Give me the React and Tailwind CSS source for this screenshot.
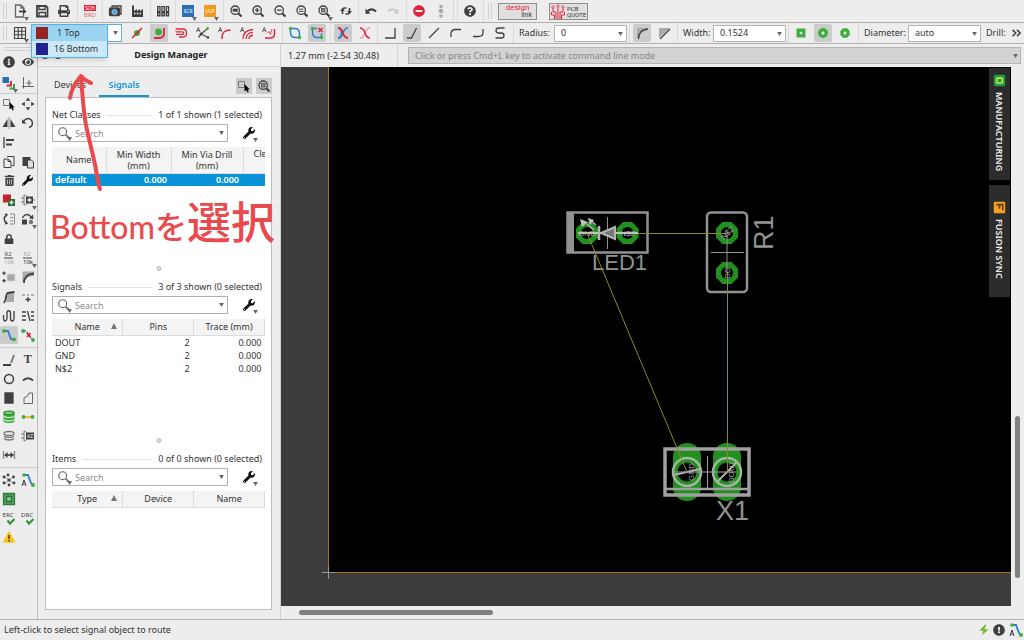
import {
  FaExclamationCircle,
  FaEye,
  FaInfoCircle,
  FaLock,
  FaMinusCircle,
  FaPrint,
  FaQuestionCircle,
  FaTrashAlt,
  FaWrench,
} from "react-icons/fa";

const DARK = "#404040";
const RED = "#e0243c";
const GREEN = "#3fae3a";
const BLUE = "#2b7fd0";

function Svg({ children, size = 16 }) {
  return (
    <svg
      width={size}
      height={size}
      viewBox="0 0 16 16"
      fill="none"
      stroke={DARK}
      strokeWidth="1.3"
      className="shrink-0"
    >
      {children}
    </svg>
  );
}

function Lens({ children }) {
  return (
    <Svg>
      <circle cx="7.200" cy="7.200" r="4.200" />
      <path d="m10.500 10.500 3 3" strokeWidth="2.200" />
      {children}
    </Svg>
  );
}

function Tag({ label, fill }) {
  return (
    <Svg>
      <rect x="2" y="2" width="12" height="12" fill={fill} stroke="none" />
      <text x="8" y="10" fontSize="5" textAnchor="middle" fill="#fff" stroke="none">
        {label}
      </text>
    </Svg>
  );
}

function Check({ label }) {
  return (
    <Svg>
      <text x="7" y="7" fontSize="6" textAnchor="middle" fill={DARK} stroke="none">
        {label}
      </text>
      <path d="m6.500 10.500 2.500 3 4.500-4.500" stroke="#2f9a35" strokeWidth="2.200" />
    </Svg>
  );
}

function RValue({ top, bottom }) {
  return (
    <Svg>
      <text x="7" y="6" fontSize="6" textAnchor="middle" fill={top} stroke="none">
        R2
      </text>
      <path d="M3 8h9" strokeWidth="1" />
      <text x="8" y="14" fontSize="6" textAnchor="middle" fill={bottom} stroke="none">
        10k
      </text>
    </Svg>
  );
}

const smallA = <path d="m1.500 7 1.800-4.500L5 7M2.200 5.500h2.200" strokeWidth=".8" />;

const ICONS = {
  open: (
    <Svg>
      <path d="M9 2H3.500v12h8v-3M9 2l3 3v1.500M9 2v3h3" stroke="#666" />
      <path d="M7 8.500h6" strokeWidth="1.800" />
      <path d="m11 5.500 3.500 3-3.500 3z" fill={DARK} stroke="none" />
    </Svg>
  ),
  save: (
    <Svg>
      <path d="M3 3h9l1.500 1.500V13.500H3z" strokeWidth="1.800" />
      <path d="M5 3v3.500h6V3M5 13V9.500h6.500V13" />
    </Svg>
  ),
  print: <FaPrint size={12} color={DARK} />,
  sch: (
    <Svg>
      <rect x="2" y="2" width="12" height="6" fill={RED} stroke="none" />
      <text x="8" y="7" fontSize="5" textAnchor="middle" fill="#fff" stroke="none">
        SCH
      </text>
      <text x="8" y="14" fontSize="6" textAnchor="middle" fill="#d06a70" stroke="none">
        BRD
      </text>
    </Svg>
  ),
  cam: (
    <Svg>
      <path d="M5 4V3h9v8h-1" />
      <rect x="2.500" y="5" width="10" height="7.500" rx="1" fill={DARK} />
      <circle cx="7.500" cy="9" r="2.600" fill="#4da3e8" stroke="#cde" strokeWidth=".6" />
    </Svg>
  ),
  factory: (
    <Svg>
      <path d="M3 14V2.500h2V8l3-2v2l3-2v2l3-2v8z" fill={DARK} stroke="none" />
      <path d="M5 10.500h7" stroke="#eee" strokeDasharray="1.500 1.200" />
    </Svg>
  ),
  books: (
    <Svg>
      <path d="M2 3h3.600v10.500H2zM6.300 3h3.600v10.500H6.300zM10.600 3h3.600v10.500h-3.600z" fill={DARK} stroke="none" />
      <path d="M3.800 4v4M8.100 4v4M12.400 4v4" stroke="#ddd" strokeWidth="1" />
      <path d="M3.800 10.500v1.500M8.100 10.500v1.500M12.400 10.500v1.500" stroke="#ddd" strokeWidth="1" />
    </Svg>
  ),
  scr: <Tag label="SCR" fill="#2a6fb5" />,
  ulp: <Tag label="ULP" fill="#f39a1d" />,
  zoomFit: (
    <Lens>
      <rect x="4.700" y="5.700" width="5" height="3" fill={DARK} stroke="none" />
    </Lens>
  ),
  zoomIn: (
    <Lens>
      <path d="M5 7.200h4.400M7.200 5v4.400" />
    </Lens>
  ),
  zoomOut: (
    <Lens>
      <path d="M5 7.200h4.400" />
    </Lens>
  ),
  zoomRedraw: (
    <Lens>
      <path d="M5 6.200h4.400M5 8.400h4.400" strokeWidth="1" />
    </Lens>
  ),
  zoomSelect: (
    <Lens>
      <rect x="5.500" y="5.500" width="3.500" height="3.500" fill="#888" stroke={DARK} strokeWidth=".7" />
    </Lens>
  ),
  swap: (
    <Svg>
      <path d="M4.500 11V7c0-1.500.5-2 2-2h2M11.500 5v4c0 1.500-.5 2-2 2h-2" strokeWidth="1.600" />
      <path d="m2 8 2.500-3L7 8zM9 8l2.500 3L14 8z" fill={DARK} stroke="none" />
    </Svg>
  ),
  undo: (
    <Svg>
      <path d="M4 9c2-3 6-4 9-.5" strokeWidth="2.200" />
      <path d="M2.500 5.500v5.500l5-.5z" fill={DARK} stroke="none" />
    </Svg>
  ),
  redo: (
    <Svg>
      <path d="M12 9c-2-3-6-4-9-.5" stroke="#ccc" strokeWidth="2.200" />
      <path d="M13.500 5.500v5.500l-5-.5z" fill="#ccc" stroke="none" />
    </Svg>
  ),
  stop: <FaMinusCircle size={12} color={RED} />,
  light: (
    <Svg>
      <g fill="#aaa" stroke="none">
        <circle cx="8" cy="3.500" r="1.800" />
        <circle cx="8" cy="8" r="2.300" />
        <circle cx="8" cy="13" r="1.800" />
      </g>
    </Svg>
  ),
  help: <FaQuestionCircle size={12} color={DARK} />,
  grid: (
    <Svg>
      <path d="M2.500 2.500h11v11h-11zM6.200 2.500v11M9.800 2.500v11M2.500 6.200h11M2.500 9.800h11" strokeWidth="1.100" />
    </Svg>
  ),
  ignore: (
    <Svg>
      <circle cx="8" cy="8" r="3" fill={GREEN} stroke="none" />
      <path d="M3 13 13 3" stroke={RED} strokeWidth="1.600" />
    </Svg>
  ),
  walk: (
    <Svg>
      <circle cx="7.500" cy="7" r="3.400" fill={GREEN} stroke="none" />
      <path d="M3 13h5c3 0 5-2 5-5V3" stroke={RED} strokeWidth="1.800" />
    </Svg>
  ),
  loop: (
    <Svg>
      <path d="M2.500 4H10c2 0 3.500 1.500 3.500 4S12 12 10 12H6M2.500 6.800H9.500c1.500 0 1.500 2.500 0 2.500H3" stroke={RED} />
    </Svg>
  ),
  fan: (
    <Svg>
      {smallA}
      <path d="m6 9 6-5M6 9l7 3.500M6 9l-2.500 3.500" stroke="#555" />
      <circle cx="12.500" cy="3.500" r="1.400" fill={GREEN} stroke="none" />
      <circle cx="6" cy="9" r="1.400" fill={DARK} stroke="none" />
      <circle cx="13" cy="12.500" r="1.200" fill={DARK} stroke="none" />
    </Svg>
  ),
  arc: (
    <Svg>
      {smallA}
      <path d="M5 14V12c0-4 3-7 8.500-7" stroke={RED} strokeWidth="1.500" />
    </Svg>
  ),
  arcs: (
    <Svg>
      {smallA}
      <path d="M4 14c0-6 4-9 10-9.500M7 14c0-4 3-6.500 7-6.500M10 14c0-2 1.500-3.500 4-3.500" stroke={RED} />
    </Svg>
  ),
  meander: (
    <Svg>
      {smallA}
      <path d="M4 13h5c3 0 4.500-1 4.500-4V4" stroke={RED} strokeWidth="1.500" />
      <path d="M6 8.500 8 6.500l1.500 3L11 4" strokeWidth=".8" stroke={RED} />
    </Svg>
  ),
  loopOn: (
    <Svg>
      <path d="M3.500 3.500v4c0 3 2 5 5 5h4v-4c0-3-2-5-5-5z" stroke={BLUE} strokeWidth="1.500" />
      <circle cx="3.500" cy="3.500" r="1.700" fill={GREEN} stroke="none" />
      <circle cx="12.500" cy="12.500" r="1.700" fill={GREEN} stroke="none" />
    </Svg>
  ),
  loopOff: (
    <Svg>
      <path d="M3.500 3.500v4c0 3 2 5 5 5h4v-4M3.500 3.500H8" stroke={BLUE} strokeWidth="1.500" />
      <path d="m9.500 3 4 4m0-4-4 4" stroke={RED} strokeWidth="1.500" />
      <circle cx="3.500" cy="3.500" r="1.700" fill={GREEN} stroke="none" />
      <circle cx="12.500" cy="12.500" r="1.700" fill={GREEN} stroke="none" />
    </Svg>
  ),
  cross1: (
    <Svg>
      <path d="M3 3c3 0 3.500 2.500 3.500 5S6 13 3 13" stroke={BLUE} strokeWidth="1.700" />
      <path d="M13 3c-3 0-4 2-5 5s-2 5-5 5" stroke={BLUE} strokeWidth="1.500" />
      <path d="M3 3c3 0 4 2 5 5s2 5 5 5" stroke={RED} strokeWidth="1.800" />
    </Svg>
  ),
  cross2: (
    <Svg>
      <path d="M13 3c-3 0-4 2-5 5s-2 5-5 5" stroke="#f0a0a8" strokeWidth="1.500" />
      <path d="M3 3c3 0 4 2 5 5s2 5 5 5" stroke={RED} strokeWidth="1.600" />
    </Svg>
  ),
  bend0: <Svg><path d="M3 13h10V3" /></Svg>,
  bend1: <Svg><path d="M3 13h4.500L12.500 3" /></Svg>,
  bend2: <Svg><path d="M3 13 13 3" /></Svg>,
  bend3: <Svg><path d="M3 12V9c0-3 1.500-4.500 4.500-4.500H13" /></Svg>,
  bend4: <Svg><path d="M3 11.500h5.500c3 0 4.500-1.500 4.500-4V4" /></Svg>,
  bend5: <Svg><path d="M12.500 3H7C3 3 3 8 7 8h2c4 0 4 5 0 5H3.500" /></Svg>,
  miterRound: (
    <Svg>
      <path d="M3 13V3h11l-2 3-5 1-2 6z" fill="#aaa" stroke="none" />
      <path d="M4.500 14C4.500 8 7 4.500 14 4" />
    </Svg>
  ),
  miterLine: (
    <Svg>
      <path d="M3 13V3h11z" fill="#aaa" stroke="none" />
      <path d="m4 14 10-10" />
    </Svg>
  ),
  viaSquare: (
    <Svg>
      <path d="M3.500 3.500h9v9h-9z" fill={GREEN} stroke="none" />
      <circle cx="8" cy="8" r="1.300" fill="#fff" stroke="none" />
    </Svg>
  ),
  viaRound: (
    <Svg>
      <circle cx="8" cy="8" r="5" fill={GREEN} stroke="none" />
      <circle cx="8" cy="8" r="1.500" fill="#fff" stroke="none" />
    </Svg>
  ),
  viaOct: (
    <Svg>
      <path d="M6 3.300h4L12.700 6v4L10 12.700H6L3.300 10V6z" fill={GREEN} stroke="none" />
      <circle cx="8" cy="8" r="1.500" fill="#fff" stroke="none" />
    </Svg>
  ),
  info: <FaInfoCircle size={12} color={DARK} />,
  eye: <FaEye size={12} color={DARK} />,
  layers: (
    <Svg>
      <path d="M1.500 2h6.500v6H1.500z" fill="#2a6fb5" stroke="none" />
      <path d="M10 6v4.500H5.500" stroke={RED} strokeWidth="2" />
      <path d="M13 9v4.500H8.500" stroke="#35a04a" strokeWidth="2" />
    </Svg>
  ),
  mark: <Svg><path d="M3.500 2v11.500M2 11.500h12M9 5v6M6.500 8h5" strokeWidth="1" stroke="#666" /></Svg>,
  group: (
    <Svg>
      <path d="M2.500 3.500h6v6h-6z" stroke="#777" strokeWidth="1" />
      <path d="M8.500 6v7.500l1.800-1.500 1.200 2.500 1.300-.6-1.200-2.400h2.200z" fill="#000" stroke="none" />
    </Svg>
  ),
  move: (
    <Svg>
      <path d="m8 1.500 2.300 3.300H5.700zM8 14.500l2.300-3.300H5.700zM1.500 8l3.300-2.300v4.600zM14.500 8l-3.300-2.300v4.600z" fill={DARK} stroke="none" />
    </Svg>
  ),
  mirror: (
    <Svg>
      <path d="M6.500 4v8H1.500zM9.500 4v8h5z" fill={DARK} stroke="none" />
      <path d="M8 2v12" strokeWidth=".8" stroke="#777" />
    </Svg>
  ),
  rotate: (
    <Svg>
      <path d="M4 6A4.500 4.500 0 1 1 9 12.500" strokeWidth="1.500" />
      <path d="M2 4v4.500h4.500z" fill={DARK} stroke="none" />
    </Svg>
  ),
  align: <Svg><path d="M3 3v11" /><path d="M5 6h8M5 10.500h6" strokeWidth="2.200" /></Svg>,
  copy: <Svg><path d="M6 2.500h7v9h-2M3 5h4l3 2.500V13.500H3zM7 5v2.500h3" strokeWidth="1" /></Svg>,
  paste: (
    <Svg>
      <path d="M2.500 3h8v9h-8z" fill={DARK} stroke="none" />
      <path d="M7.500 6h4l2 2v6h-6z" fill="#ddd" strokeWidth="1" />
    </Svg>
  ),
  trash: <FaTrashAlt size={11} color={DARK} />,
  wrench: <FaWrench size={11} color="#111" />,
  add: (
    <Svg>
      <path d="M2 2.500h8v8H2z" fill="#cf2027" stroke="none" />
      <path d="M7 7h7v7H7z" fill="#2b6b34" stroke="none" />
      <path d="M8.500 10.500h4M10.500 8.500v4" stroke="#fff" />
    </Svg>
  ),
  addGate: (
    <Svg>
      <path d="M1 6h3m-3 4h3M4 3c5 0 5 10 0 10zM12 8h3" strokeWidth="1" stroke="#777" />
      <path d="M6 4.500h7v7H6z" fill={DARK} stroke="none" />
      <path d="M7.500 8h4M9.500 6v4" stroke="#fff" />
    </Svg>
  ),
  pinswap: (
    <Svg>
      <path d="M5.500 4C2.500 6 2.500 10 5.500 12" strokeWidth="1.500" />
      <path d="M3.500 2.500 7 3 5.500 6zM3.500 13.500 7 13l-1.500-3z" fill={DARK} stroke="none" />
      <path d="M9 3h4.500v10H9M9 6.500h3M9 10h3" strokeWidth="1" stroke="#888" />
    </Svg>
  ),
  replace: (
    <Svg>
      <path d="M3 7V6c2-3.500 6-3.500 8 0" strokeWidth="1.500" />
      <path d="m9 7.500 4.500.5-.5-4.500z" fill={DARK} stroke="none" />
      <path d="M2 8.500h5v5H2z" fill={DARK} stroke="none" />
      <circle cx="11" cy="11" r="2.200" fill="#777" stroke="none" />
    </Svg>
  ),
  lock: <FaLock size={10} color={DARK} />,
  name: <RValue top="#555" bottom="#aaa" />,
  value: <RValue top="#aaa" bottom="#222" />,
  smash: (
    <Svg>
      <path d="M6.500 5.500h7v6h-7z" fill="#aaa" stroke="#aaa" strokeDasharray="1 1" />
      <path d="M3 2.500v3.500M1.300 4.200h3.400M3 10v3.500M1.300 11.700h3.400" />
    </Svg>
  ),
  split: (
    <Svg>
      <path d="M2.500 2.500v11L8 8l6-1V2.500z" fill="#aaa" stroke="none" />
      <path d="M4 14c0-5 2-9 10-9.500" strokeWidth="1.800" />
    </Svg>
  ),
  miter: (
    <Svg>
      <path d="M5 13 6.500 4H13v9z" fill="#aaa" stroke="none" />
      <path d="M2.500 13.500c3 0 2-9 4-9.500l7-1" strokeWidth="1.800" />
    </Svg>
  ),
  junction: <Svg><path d="M2 6h3m2 0h2m2 0h3" stroke="#999" /><path d="M8 8v5M5.500 10.500h5" /></Svg>,
  wave: <Svg><path d="M2.500 7v3c0 4 3.500 4 3.500 0V5c0-3 3.500-3 3.500 0v5c0 4 3.500 4 3.500 0V3" /></Svg>,
  diff: <Svg><path d="M2 4h4M2 8h4M2 12h4M11 4h3M11 8h3M11 12h3M7.500 3l2.500 10" /></Svg>,
  route: (
    <Svg>
      <path d="M3 4h4l3 8h3" stroke={BLUE} strokeWidth="1.800" />
      <circle cx="3" cy="4" r="2" fill={GREEN} stroke="none" />
      <circle cx="13" cy="12.500" r="2" fill={GREEN} stroke="none" />
    </Svg>
  ),
  ripup: (
    <Svg>
      <path d="M3 4h3l5 7 2 2" stroke={BLUE} strokeDasharray="3 1" />
      <path d="m7 6 3.500 4m0-4L7 10" stroke="#e11" strokeWidth="1.500" />
      <circle cx="3" cy="4" r="1.900" fill={GREEN} stroke="none" />
      <circle cx="13" cy="13" r="1.900" fill={GREEN} stroke="none" />
    </Svg>
  ),
  line: <Svg><path d="M2 13h8" strokeWidth="2" /><path d="m10 11 3-8" stroke="#777" strokeWidth="2" /></Svg>,
  text: (
    <span className="font-['Liberation_Serif',serif] text-[12px] font-bold leading-none text-[#404040]">
      T
    </span>
  ),
  circle: <Svg><circle cx="8" cy="8" r="4.500" strokeWidth="1.500" /></Svg>,
  arcDraw: <Svg><path d="M3 9.500c3-3 7-3 10 0" strokeWidth="1.900" /></Svg>,
  rect: <Svg><path d="M4 3h8v10H4z" fill={DARK} /></Svg>,
  polygon: <Svg><path d="M4 13.500V8l3.500-2L9 3h3.500v10.500z" stroke="#666" strokeWidth="1" /></Svg>,
  via: (
    <Svg>
      <path d="M2.500 3.500v9c2 2 9 2 11 0v-9z" fill={GREEN} stroke="none" />
      <ellipse cx="8" cy="4" rx="5" ry="1.800" fill="#7fd07a" stroke="#2b8a30" />
      <path d="M2.500 7c2 2 9 2 11 0M2.500 10.500c2 2 9 2 11 0" stroke="#fff" strokeWidth="1" />
    </Svg>
  ),
  signal: (
    <Svg>
      <path d="M3 8h10" stroke="#f0b020" strokeWidth="1.800" />
      <circle cx="3.500" cy="8" r="1.900" fill={GREEN} stroke="none" />
      <circle cx="12.500" cy="8" r="1.900" fill={GREEN} stroke="none" />
    </Svg>
  ),
  hole: (
    <Svg>
      <ellipse cx="8" cy="5.500" rx="5" ry="2" stroke="#777" />
      <path d="M3 8c2 2 8 2 10 0M3 10.500c2 2 8 2 10 0" stroke="#777" />
    </Svg>
  ),
  attribute: (
    <Svg>
      <path d="M1 6h3m-3 4h3M4 3c5 0 5 10 0 10z" strokeWidth="1" stroke="#777" />
      <path d="M6 4.500h8v7H6z" fill={DARK} stroke="none" />
      <text x="10" y="10" fontSize="5" textAnchor="middle" fill="#fff" stroke="none">
        AZ
      </text>
    </Svg>
  ),
  dimension: (
    <Svg>
      <path d="M2.500 4v8M13.500 4v8" stroke="#888" />
      <path d="M5 8h6" strokeWidth="1.600" />
      <path d="m3 8 3.500-3v6zM13 8 9.500 5v6z" fill={DARK} stroke="none" />
    </Svg>
  ),
  ratsnest: (
    <Svg>
      <path d="m3 4 5 4 5-4M3 12l5-4 5 4" strokeWidth=".6" />
      <g fill={DARK} stroke="none">
        <circle cx="8" cy="8" r="1.600" />
        <circle cx="3" cy="5" r="1.400" />
        <circle cx="7" cy="3" r="1.400" />
        <circle cx="12.500" cy="5" r="1.400" />
        <circle cx="3" cy="11" r="1.400" />
        <circle cx="8" cy="13" r="1.400" />
        <circle cx="13" cy="11" r="1.400" />
      </g>
    </Svg>
  ),
  autoroute: (
    <Svg>
      <path d="M4 3h4l3 8 2 2" stroke={BLUE} strokeWidth="1.800" />
      <path d="m2 14 2-6 2 6m-3.300-2h2.600" strokeWidth="1" />
      <circle cx="4" cy="3" r="1.800" fill={GREEN} stroke="none" />
      <circle cx="13" cy="13" r="2" fill={GREEN} stroke="none" />
    </Svg>
  ),
  board: (
    <Svg>
      <path d="M2.500 2.500h11v11h-11z" fill="#4fa35f" stroke="#2f7d40" />
      <path d="M5.500 5.500h5v5h-5z" fill="#8fca95" stroke="#2a6b38" />
    </Svg>
  ),
  erc: <Check label="ERC" />,
  drc: <Check label="DRC" />,
  warning: (
    <Svg>
      <path d="M8 3 13.500 13h-11z" fill="#fcc41c" stroke="#fcc41c" strokeLinejoin="round" />
      <path d="M8 6v4M8 11v1.600" strokeWidth="1.500" />
    </Svg>
  ),
};

function Triangle({ className = "" }) {
  return (
    <svg viewBox="0 0 6 5" className={`h-1 w-[5px] fill-[#666] ${className}`}>
      <path d="M0 0h6L3 5z" />
    </svg>
  );
}

function Tool({ name, active, drop }) {
  return (
    <button
      type="button"
      aria-label={name}
      className={`relative flex h-4 w-[22px] shrink-0 items-center justify-center ${
        active ? "before:absolute before:inset-x-[2px] before:-inset-y-px before:rounded-xs before:bg-[#cbcbcb]" : ""
      }`}
    >
      <span className="relative">{ICONS[name]}</span>
      {drop && <Triangle className="absolute -bottom-[2px] right-[2px]" />}
    </button>
  );
}

function Separator({ narrow }) {
  return (
    <div
      className={`flex shrink-0 justify-center self-stretch ${narrow ? "w-[3px]" : "w-1"}`}
    >
      <div className="w-px bg-[#dadada]" />
    </div>
  );
}

function Handle() {
  return (
    <div className="my-[3px] ml-[3px] mr-[2px] w-1 shrink-0 self-stretch border-x border-[#cfcfcf]" />
  );
}

function Field({ id, label, value, labelClass }) {
  return (
    <>
      <label htmlFor={id} className={`shrink-0 ${labelClass}`}>
        {label}
      </label>
      <div className="relative w-[73px] shrink-0">
        <select
          id={id}
          className="block h-[17px] w-full appearance-none border border-[#b5b5b5] bg-white pl-[6px]"
        >
          <option>{value}</option>
        </select>
        <Triangle className="pointer-events-none absolute right-1 top-[7px]" />
      </div>
    </>
  );
}

function MainToolbar() {
  return (
    <div className="flex h-[23px] items-center border-b border-[#b0b0b0]">
      <Handle />
      <Tool name="open" drop />
      <Tool name="save" />
      <Tool name="print" />
      <Separator />
      <Tool name="sch" />
      <Separator narrow />
      <Tool name="cam" />
      <Tool name="factory" />
      <Separator />
      <Tool name="books" />
      <Separator narrow />
      <Tool name="scr" drop />
      <Tool name="ulp" drop />
      <Separator />
      <Tool name="zoomFit" />
      <Tool name="zoomIn" />
      <Tool name="zoomOut" />
      <Tool name="zoomRedraw" />
      <Tool name="zoomSelect" drop />
      <Tool name="swap" />
      <Separator narrow />
      <Tool name="undo" />
      <Tool name="redo" />
      <Separator />
      <Tool name="stop" />
      <Tool name="light" />
      <Separator narrow />
      <Separator />
      <Tool name="help" />
      <Separator />
      <Handle />
      <button
        type="button"
        className="ml-1 mt-px flex h-[17px] w-[39px] shrink-0 flex-col border border-[#8f8f8f] bg-[#e0e0e0] px-1 font-['Roboto',sans-serif] text-[8px] leading-[8px] text-[#e0243c]"
      >
        design
        <span className="self-end text-[7px] leading-[7px] text-[#404040]">link</span>
      </button>
      <button
        type="button"
        className="ml-3 mt-px flex h-[17px] w-[39px] shrink-0 items-center border border-[#8f8f8f] bg-[#e0e0e0] text-left font-['Roboto',sans-serif] text-[6px] leading-[6px]"
      >
        <Svg>
          <path
            d="M6 15V8H3V4M8 15V3M10 15V8h3V4M4.500 15v-4H1.500V8M11.500 15v-4h3V8"
            stroke={RED}
            strokeWidth="1"
          />
          <g fill="#fff" stroke={RED} strokeWidth=".8">
            <circle cx="3" cy="3" r="1.200" />
            <circle cx="8" cy="2" r="1.200" />
            <circle cx="13" cy="3" r="1.200" />
          </g>
        </Svg>
        <span className="ml-px">
          PCB
          <br />
          QUOTE
        </span>
      </button>
    </div>
  );
}

function LayerSelect() {
  return (
    <div className="relative mr-1 w-[91px] shrink-0">
      <select
        aria-label="Layer"
        className="block h-[18px] w-full appearance-none border border-[#5bb0dc] bg-white pl-6"
      >
        <option>1 Top</option>
        <option>16 Bottom</option>
      </select>
      <Triangle className="pointer-events-none absolute right-1 top-[7px]" />
      <ul
        role="listbox"
        className="absolute left-0 top-0 z-10 w-[77px] border border-[#5bb0dc] bg-[#cbe8f8] shadow-md"
      >
        <li role="option" aria-selected="true" className="flex h-4 items-center gap-[9px] bg-[#9bd4f0] pl-1">
          <span className="size-3 bg-[#962222]" />
          1 Top
        </li>
        <li role="option" aria-selected="false" className="flex h-4 items-center gap-[6px] pl-1">
          <span className="size-3 bg-[#222296]" />
          16 Bottom
        </li>
      </ul>
    </div>
  );
}

function RouteToolbar() {
  return (
    <div className="flex h-[21px] items-center border-b border-[#b0b0b0]">
      <Handle />
      <Tool name="grid" drop />
      <LayerSelect />
      <Tool name="ignore" />
      <Tool name="walk" active />
      <Tool name="loop" />
      <Tool name="fan" />
      <Tool name="arc" />
      <Tool name="arcs" />
      <Tool name="meander" />
      <Separator />
      <Tool name="loopOn" />
      <Tool name="loopOff" active />
      <Separator />
      <Tool name="cross1" active />
      <Tool name="cross2" />
      <Separator narrow />
      <Tool name="bend0" />
      <Tool name="bend1" active />
      <Tool name="bend2" />
      <Tool name="bend3" />
      <Tool name="bend4" />
      <Tool name="bend5" />
      <Separator />
      <Field id="radius" label="Radius:" value="0" labelClass="ml-1 w-[35px]" />
      <Separator />
      <Tool name="miterRound" active />
      <Tool name="miterLine" />
      <Separator />
      <Field id="width" label="Width:" value="0.1524" labelClass="ml-1 w-[30px]" />
      <Separator />
      <Tool name="viaSquare" />
      <Tool name="viaRound" active />
      <Tool name="viaOct" />
      <Separator />
      <Field id="diameter" label="Diameter:" value="auto" labelClass="ml-1 w-[44px]" />
      <span className="ml-[5px]">Drill:</span>
      <button type="button" aria-label="More" className="ml-auto mr-[2px] shrink-0">
        <Svg size={10}>
          <path d="m1 3 5 5-5 5M8 3l5 5-5 5" strokeWidth="2.500" />
        </Svg>
      </button>
    </div>
  );
}

const TOOL_GROUPS = [
  {
    className: "h-[42px] border-transparent",
    tools: ["info", "eye", "layers", "mark"],
  },
  {
    className: "h-[254px] border-[#cfcfcf] pb-[2px]",
    tools: [
      "group", "move", "mirror", "rotate", "align", null, "copy", "paste",
      "trash", "wrench", "add", "addGate", "pinswap", "replace", "lock", null,
      "name", "value", "smash", "split", "miter", "junction", "wave", "diff",
      "route", "ripup",
    ],
  },
  {
    className: "h-[120px] border-[#cfcfcf] py-[2px]",
    tools: [
      "line", "text", "circle", "arcDraw", "rect", "polygon", "via", "signal",
      "hole", "attribute", "dimension", null,
    ],
  },
  {
    className: "h-[80px] border-[#cfcfcf] pt-[2px]",
    tools: ["ratsnest", "autoroute", "board", null, "erc", "drc", "warning", null],
  },
];

const DROP_TOOLS = ["layers", "addGate", "replace", "value"];

function ToolPalette() {
  return (
    <nav className="w-[38px] shrink-0 border-r border-[#bdbdbd] pt-[3px]">
      <div className="mx-1 h-[4px] border-y border-[#cfcfcf]" />
      {TOOL_GROUPS.map((group, i) => (
        <div
          key={i}
          className={`grid auto-rows-fr grid-cols-2 items-center justify-items-center border-t ${group.className}`}
        >
          {group.tools.map((name, j) =>
            name ? (
              <Tool
                key={name}
                name={name}
                active={name === "route"}
                drop={DROP_TOOLS.includes(name)}
              />
            ) : (
              <span key={j} />
            )
          )}
        </div>
      ))}
    </nav>
  );
}

function SearchRow({ label }) {
  return (
    <div className="mt-[3px] flex items-center">
      <div className="relative flex h-[18px] w-[176px] items-center border border-[#b0b0b0] bg-white pl-1">
        <span className="relative">
          <Svg size={14}>
            <circle cx="6.500" cy="6.500" r="4.500" stroke="#666" />
            <path d="m10 10 3 3" stroke="#666" strokeWidth="2" />
          </Svg>
          <Triangle className="absolute -bottom-px -right-px" />
        </span>
        <input
          aria-label={label}
          placeholder="Search"
          className="ml-1 h-4 w-full min-w-0 bg-transparent outline-none placeholder:text-[#8a8a8a]"
        />
        <Triangle className="mr-[3px] shrink-0" />
      </div>
      <button type="button" aria-label="Settings" className="relative ml-[14px] p-px">
        <FaWrench size={12} color="#111" />
        <Triangle className="absolute -bottom-[2px] -right-[2px]" />
      </button>
    </div>
  );
}

function Section({ title, summary, children, grip }) {
  return (
    <section className="relative h-[172px]">
      <div className="flex h-3 items-center gap-[6px] leading-3">
        <h2>{title}</h2>
        <div className="h-px flex-1 bg-[#e2e2e2]" />
        <span className="pr-[3px]">{summary}</span>
      </div>
      <SearchRow label={`Search ${title}`} />
      {children}
      {grip && (
        <span className="absolute bottom-[10px] left-1/2 size-[5px] -translate-x-1/2 rounded-full border border-[#bbb] bg-[#ddd]" />
      )}
    </section>
  );
}

function SortMark() {
  return (
    <svg viewBox="0 0 6 6" className="absolute right-[5px] top-1 size-[6px] fill-[#777]">
      <path d="M0 6h6L3 0z" />
    </svg>
  );
}

const TH = "relative border-b border-r border-[#dcdcdc] bg-[#f4f4f4] p-0 font-normal";

function DataTable({ columns, rows }) {
  return (
    <table className="mt-[5px] w-full table-fixed border-collapse">
      <thead>
        <tr className="h-4">
          {columns.map((name, i) => (
            <th key={name} className={`${TH} leading-[14px]`}>
              {name}
              {i === 0 && <SortMark />}
            </th>
          ))}
        </tr>
      </thead>
      <tbody>
        {rows.map((row) => (
          <tr key={row[0]} className="leading-[13px]">
            <td className="p-0 pl-[3px]">{row[0]}</td>
            <td className="p-0 pr-1 text-right">{row[1]}</td>
            <td className="p-0 pr-[3px] text-right">{row[2]}</td>
          </tr>
        ))}
      </tbody>
    </table>
  );
}

function DesignManager() {
  return (
    <aside className="flex w-[242px] shrink-0 flex-col">
      <div className="flex h-[23px] shrink-0 items-center border-b border-[#d5d5d5] bg-[#f2f2f2] pl-[3px]">
        <span className="size-2 rounded-full bg-[#404040]" />
        <span className="ml-[5px] size-2 rounded-full bg-[#404040]" />
        <h1 className="flex-1 text-center font-bold text-[#222]">Design Manager</h1>
      </div>
      <div className="flex h-[30px] shrink-0 items-end pl-[7px] pr-2" role="tablist">
        <button type="button" role="tab" className="h-[23px] w-[50px] pb-px">
          Devices
        </button>
        <button
          type="button"
          role="tab"
          aria-selected="true"
          className="ml-1 h-[23px] w-[50px] border-b-2 border-[#1295d8] font-semibold text-[#1295d8]"
        >
          Signals
        </button>
        <div className="mb-[3px] ml-auto flex gap-1">
          <button type="button" aria-label="Select" className="bg-[#cbcbcb]">
            {ICONS.group}
          </button>
          <button type="button" aria-label="Zoom to selection" className="bg-[#cbcbcb]">
            {ICONS.zoomSelect}
          </button>
        </div>
      </div>
      <div className="mb-[9px] ml-[7px] mr-2 min-h-0 flex-1 overflow-hidden border border-[#bdbdbd] bg-white px-[6px] pt-[11px]">
        <Section title="Net Classes" summary="1 of 1 shown (1 selected)" grip>
          <table className="mt-[5px] w-full table-fixed border-collapse">
            <thead>
              <tr className="h-[26px] leading-[11px]">
                <th className={`${TH} w-[54px]`}>Name</th>
                <th className={`${TH} w-[65px]`}>
                  Min Width
                  <br />
                  (mm)
                </th>
                <th className={`${TH} w-[72px]`}>
                  Min Via Drill
                  <br />
                  (mm)
                </th>
                <th className="overflow-hidden border-b border-[#dcdcdc] bg-[#f4f4f4] p-0 pl-[10px] text-left align-top font-normal leading-[14px]">
                  Cle
                </th>
              </tr>
            </thead>
            <tbody>
              <tr className="bg-[#0a93d8] font-semibold leading-3 text-white">
                <td className="p-0 pl-[3px]">default</td>
                <td className="p-0 pr-1 text-right">0.000</td>
                <td className="p-0 pr-1 text-right">0.000</td>
                <td className="p-0" />
              </tr>
            </tbody>
          </table>
        </Section>
        <Section title="Signals" summary="3 of 3 shown (0 selected)" grip>
          <DataTable
            columns={["Name", "Pins", "Trace (mm)"]}
            rows={[
              ["DOUT", "2", "0.000"],
              ["GND", "2", "0.000"],
              ["N$2", "2", "0.000"],
            ]}
          />
        </Section>
        <Section title="Items" summary="0 of 0 shown (0 selected)">
          <DataTable columns={["Type", "Device", "Name"]} rows={[]} />
        </Section>
      </div>
    </aside>
  );
}

function Pad({ x, y, label, turn = 0 }) {
  return (
    <g transform={`translate(${x} ${y})`}>
      <path
        d="M-4.600-11h9.200L11-4.600v9.200L4.600 11h-9.200L-11 4.600v-9.200z"
        fill="#22901f"
      />
      <circle r="6" fill="#000" />
      <text
        transform={`rotate(${turn})`}
        y="3"
        fontSize="8"
        textAnchor="middle"
        fill="#aaa"
      >
        {label}
      </text>
    </g>
  );
}

function ScrewPad({ x, label, slash }) {
  return (
    <g transform={`translate(${x} 472)`}>
      <rect x="-14" y="-29" width="28" height="58" rx="14" fill="#22901f" />
      <circle r="9.500" fill="#000" />
      <circle r="14" fill="none" stroke="#a3b5a3" strokeWidth="2.500" />
      <path d={slash} stroke="#b0b0b0" strokeWidth="2" />
      <text transform="rotate(-90)" y="7" fontSize="8" textAnchor="middle" fill="#aaa">
        {label}
      </text>
    </g>
  );
}

function Board() {
  return (
    <svg className="absolute inset-0 size-full" fontFamily="Liberation Sans, sans-serif">
      <g transform="translate(-281 -67)" fill="none" stroke="none">
        <path d="M328.500 566v13M322 572.500h13" stroke="#999" />

        <rect x="567.500" y="212.500" width="80" height="40" stroke="#929292" strokeWidth="2.500" />
        <rect x="567" y="212" width="7" height="41" fill="#929292" />
        <path d="M607.500 217v32" stroke="#929292" />
        <Pad x={587} y={233} label="GND" />
        <Pad x={627.5} y={233} label="N$2" />
        <path d="M578 233h60" stroke="#c0c0c0" strokeWidth="2" />
        <path d="M599 226v14" stroke="#b5b5b5" strokeWidth="2.500" />
        <path d="m601 233 14-6v12z" stroke="#b5b5b5" strokeWidth="2" fill="#777" />
        <path d="m594 230-7-6m9 1-7-6" stroke="#b5b5b5" strokeWidth="1.500" />
        <path d="m580 219 8 3-6 5zM588 218l6 2-4 5z" fill="#c0c0c0" />
        <text x="592" y="270" fontSize="22" fill="#929292">
          LED1
        </text>

        <rect x="707" y="212.500" width="40" height="79.500" rx="4" stroke="#929292" strokeWidth="2.500" />
        <path d="M711 252.500h33" stroke="#929292" />
        <Pad x={727} y={233} label="N$2" turn={-45} />
        <Pad x={727} y={273} label="DO" turn={-90} />
        <path d="M727 233v40" stroke="#929292" />
        <text transform="translate(773 250) rotate(-90)" fontSize="27" fill="#929292">
          R1
        </text>

        <ScrewPad x={687} label="GND" slash="m-13 3 26-6" />
        <ScrewPad x={727} label="DOUT" slash="m-10 10 20-20" />
        <rect x="665" y="449" width="84" height="46" stroke="#a0a0a0" strokeWidth="3.500" />
        <path d="M665 489h84" stroke="#a0a0a0" strokeWidth="2.500" />
        <path d="M707.500 456v33M673 472h64" stroke="#a0a0a0" />
        <text x="716" y="520" fontSize="27" fill="#929292">
          X1
        </text>

        <path d="m587 233 100 239M638 233.500h89M727.500 273v199" stroke="#8a8a24" />
      </g>
    </svg>
  );
}

function SideTab({ label, icon }) {
  return (
    <button
      type="button"
      className="flex h-[112px] w-[21px] flex-col items-center justify-center gap-[5px] bg-[#2c2c2c] pb-[2px] text-[9px] font-semibold leading-none text-[#f0f0f0]"
    >
      {icon}
      <span className="whitespace-nowrap [writing-mode:vertical-rl]">{label}</span>
    </button>
  );
}

function Editor() {
  return (
    <main className="flex min-w-0 flex-1 flex-col border-l border-[#d0d0d0]">
      <div className="flex h-[23px] shrink-0 items-center">
        <output className="flex w-[117px] shrink-0 items-center self-stretch border-r border-[#d5d5d5] pl-[7px]">
          1.27 mm (-2.54 30.48)
        </output>
        <div className="relative ml-[10px] mr-[3px] flex-1">
          <input
            aria-label="Command line"
            placeholder="Click or press Cmd+L key to activate command line mode"
            className="block h-[17px] w-full border border-[#b5b5b5] bg-[#d3d3d3] pl-[6px] outline-none placeholder:text-[#858585]"
          />
          <Triangle className="absolute right-[3px] top-[7px]" />
        </div>
      </div>
      <div className="flex min-h-0 flex-1">
        <div className="relative flex-1 overflow-hidden bg-[#3c3c3c] pb-[33px] pl-[47px]">
          <div className="flex h-full flex-col items-end gap-[5px] border-b border-l border-[#a8701c] bg-black pr-px pt-px">
            <SideTab
              label="MANUFACTURING"
              icon={
                <Svg size={13}>
                  <rect x="1" y="1" width="14" height="14" rx="2" fill="#1f9a4a" stroke="none" />
                  <rect x="4.500" y="5" width="7" height="6" rx="1" stroke="#c8e838" strokeWidth="2" />
                </Svg>
              }
            />
            <SideTab
              label="FUSION SYNC"
              icon={
                <Svg size={13}>
                  <rect x="1" y="1" width="14" height="14" rx="1" fill="#f5a01e" stroke="none" />
                  <path d="M4 4.500h8v7M8 4.500v5" strokeWidth="2" stroke="#5b3b10" />
                </Svg>
              }
            />
          </div>
          <Board />
        </div>
        <div className="flex w-[13px] shrink-0 flex-col items-center justify-end pb-7">
          <div className="h-[162px] w-[5px] rounded-full bg-[#7f7f7f]" />
        </div>
      </div>
      <div className="flex h-[13px] shrink-0 items-center pl-[18px]">
        <div className="h-[5px] w-[194px] rounded-full bg-[#7f7f7f]" />
      </div>
    </main>
  );
}

function Annotation() {
  return (
    <div className="pointer-events-none absolute left-[50px] top-[70px] z-20 w-[230px] text-[#e84a4e]">
      <svg viewBox="0 0 230 124" className="block h-[124px] w-[230px]" fill="none">
        <path
          d="M50 119c-3-9-3-17-6-29-3-14-7-27-9-41-2-14-3-30-4-43M20 28c1-8 5-15 11-22 3 4 6 5 10 7"
          stroke="currentColor"
          strokeWidth="4"
          strokeLinecap="round"
          strokeLinejoin="round"
        />
      </svg>
      <p className="flex items-baseline whitespace-nowrap font-['Lato','Noto_Sans_CJK_JP',sans-serif] text-[32px] font-medium leading-[56px]">
        Bottomを<span className="text-[44px]">選択</span>
      </p>
    </div>
  );
}

export default function App() {
  return (
    <div className="relative flex h-screen flex-col overflow-hidden bg-[#ededed] font-['Noto_Sans','Noto_Sans_CJK_JP',sans-serif] text-[9px] leading-3 text-[#333]">
      <MainToolbar />
      <RouteToolbar />
      <div className="flex min-h-0 flex-1">
        <ToolPalette />
        <DesignManager />
        <Editor />
      </div>
      <footer className="flex h-[21px] shrink-0 items-center border-t border-[#b0b0b0] pl-1">
        Left-click to select signal object to route
        <div className="ml-auto flex items-center gap-[3px]">
          <Svg size={12}>
            <path d="M9 1 2 9h5l-1.500 6L14 7H8.500L11 1z" fill="#76b82a" stroke="none" />
          </Svg>
          <FaExclamationCircle size={12} color={DARK} />
          {ICONS.autoroute}
        </div>
      </footer>
      <Annotation />
    </div>
  );
}
